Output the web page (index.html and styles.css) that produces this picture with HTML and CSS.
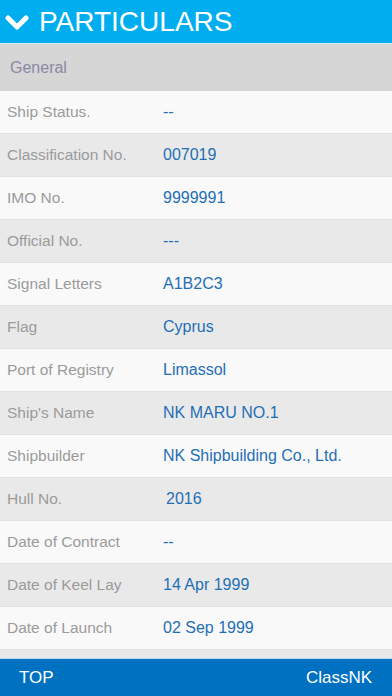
FILE: index.html
```html
<!DOCTYPE html>
<html lang="en">
<head>
    <meta charset="UTF-8">
    <meta name="viewport" content="width=device-width, initial-scale=1.0">
    <title>Particulars</title>
    <link rel="stylesheet" href="styles.css">
</head>
<body>
    <div class="screen">
        <!-- Title bar -->
        <div class="title-bar">
            <svg class="chevron" width="24" height="18" viewBox="0 0 24 18">
                <path d="M3 4 L12 13 L21 4" fill="none" stroke="#fff" stroke-width="5" stroke-linecap="round" stroke-linejoin="round"/>
            </svg>
            <span class="title">PARTICULARS</span>
        </div>

        <div class="section-head">General</div>

        <!-- Particulars list -->
        <div class="list">
            <div class="row"><span class="label">Ship Status.</span><span class="value">--</span></div>
            <div class="row alt"><span class="label">Classification No.</span><span class="value">007019</span></div>
            <div class="row"><span class="label">IMO No.</span><span class="value">9999991</span></div>
            <div class="row alt"><span class="label">Official No.</span><span class="value">---</span></div>
            <div class="row"><span class="label">Signal Letters</span><span class="value">A1B2C3</span></div>
            <div class="row alt"><span class="label">Flag</span><span class="value">Cyprus</span></div>
            <div class="row"><span class="label">Port of Registry</span><span class="value">Limassol</span></div>
            <div class="row alt"><span class="label">Ship's Name</span><span class="value">NK MARU NO.1</span></div>
            <div class="row"><span class="label">Shipbuilder</span><span class="value">NK Shipbuilding Co., Ltd.</span></div>
            <div class="row alt"><span class="label">Hull No.</span><span class="value indent">2016</span></div>
            <div class="row"><span class="label">Date of Contract</span><span class="value">--</span></div>
            <div class="row alt"><span class="label">Date of Keel Lay</span><span class="value">14 Apr 1999</span></div>
            <div class="row"><span class="label">Date of Launch</span><span class="value">02 Sep 1999</span></div>
            <div class="row alt"></div>
        </div>

        <!-- Bottom bar -->
        <div class="footer">
            <span>TOP</span>
            <span>ClassNK</span>
        </div>
    </div>
</body>
</html>
```

FILE: styles.css
```css
body {
    margin: 0;
    padding: 0;
    font-family: 'Liberation Sans', Arial, sans-serif;
    background-color: #f9f9f9;
}
.screen {
    display: flex;
    flex-direction: column;
    width: 392px;
    height: 696px;
    overflow: hidden;
}
.title-bar {
    display: flex;
    align-items: center;
    gap: 10px;
    height: 43px;
    padding-left: 5px;
    background-color: #00aeef;
    border-bottom: 1px solid #cdeaf8;
    color: #fff;
    flex-shrink: 0;
}
.chevron {
    margin-top: 2px;
}
.title {
    font-size: 28px;
}
.section-head {
    height: 47px;
    line-height: 47px;
    padding-left: 10px;
    background-color: #d6d6d6;
    color: #8a88a3;
    font-size: 16px;
    flex-shrink: 0;
}
.list {
    flex: 1;
    overflow: hidden;
}
.row {
    display: flex;
    align-items: center;
    height: 42px;
    border-bottom: 1px solid #e1e1e1;
    background-color: #f9f9f9;
}
.row.alt {
    background-color: #e9e9e9;
}
.label {
    width: 156px;
    padding-left: 7px;
    color: #9b9b9b;
    font-size: 15.5px;
}
.value {
    color: #1f6fb5;
    font-size: 16px;
}
.value.indent {
    padding-left: 3px;
}
.footer {
    display: flex;
    justify-content: space-between;
    align-items: center;
    height: 37px;
    padding: 0 20px 0 19px;
    background-color: #0070c0;
    border-top: 1px solid #b9dcf2;
    color: #fff;
    font-size: 17px;
    flex-shrink: 0;
}
```
